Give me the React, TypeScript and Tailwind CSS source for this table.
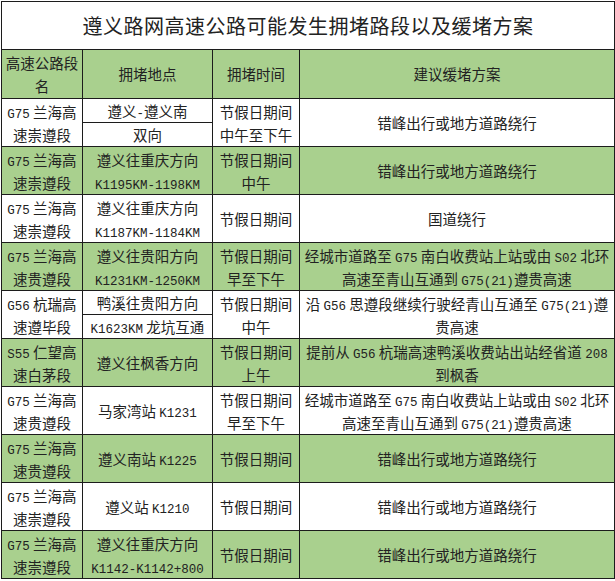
import React from 'react';

type Row = {
  green: boolean;
  road: string[];
  place: string[][]; // one entry = single cell, two entries = split cell
  time: string[];
  plan: string[];
};

const rows: Row[] = [
  {
    green: false,
    road: ['G75 兰海高', '速崇遵段'],
    place: [['遵义-遵义南'], ['双向']],
    time: ['节假日期间', '中午至下午'],
    plan: ['错峰出行或地方道路绕行'],
  },
  {
    green: true,
    road: ['G75 兰海高', '速崇遵段'],
    place: [['遵义往重庆方向', 'K1195KM-1198KM']],
    time: ['节假日期间', '中午'],
    plan: ['错峰出行或地方道路绕行'],
  },
  {
    green: false,
    road: ['G75 兰海高', '速崇遵段'],
    place: [['遵义往重庆方向', 'K1187KM-1184KM']],
    time: ['节假日期间'],
    plan: ['国道绕行'],
  },
  {
    green: true,
    road: ['G75 兰海高', '速贵遵段'],
    place: [['遵义往贵阳方向', 'K1231KM-1250KM']],
    time: ['节假日期间', '早至下午'],
    plan: ['经城市道路至 G75 南白收费站上站或由 S02 北环', '高速至青山互通到 G75(21)遵贵高速'],
  },
  {
    green: false,
    road: ['G56 杭瑞高', '速遵毕段'],
    place: [['鸭溪往贵阳方向'], ['K1623KM 龙坑互通']],
    time: ['节假日期间', '中午'],
    plan: ['沿 G56 思遵段继续行驶经青山互通至 G75(21)遵', '贵高速'],
  },
  {
    green: true,
    road: ['S55 仁望高', '速白茅段'],
    place: [['遵义往枫香方向']],
    time: ['节假日期间', '上午'],
    plan: ['提前从 G56 杭瑞高速鸭溪收费站出站经省道 208', '到枫香'],
  },
  {
    green: false,
    road: ['G75 兰海高', '速贵遵段'],
    place: [['马家湾站 K1231']],
    time: ['节假日期间', '早至下午'],
    plan: ['经城市道路至 G75 南白收费站上站或由 S02 北环', '高速至青山互通到 G75(21)遵贵高速'],
  },
  {
    green: true,
    road: ['G75 兰海高', '速贵遵段'],
    place: [['遵义南站 K1225']],
    time: ['节假日期间'],
    plan: ['错峰出行或地方道路绕行'],
  },
  {
    green: false,
    road: ['G75 兰海高', '速崇遵段'],
    place: [['遵义站 K1210']],
    time: ['节假日期间'],
    plan: ['错峰出行或地方道路绕行'],
  },
  {
    green: true,
    road: ['G75 兰海高', '速崇遵段'],
    place: [['遵义往重庆方向', 'K1142-K1142+800']],
    time: ['节假日期间'],
    plan: ['错峰出行或地方道路绕行'],
  },
];

// latin runs look like SimSun half-width glyphs in the original
function Mixed({ text }: { text: string }) {
  const parts = text.split(/([A-Za-z0-9\-+()]+)/);
  return (
    <>
      {parts.map((p, i) =>
        i % 2 === 1 ? (
          <span key={i} className="font-['Liberation_Mono',monospace] text-[12.5px] leading-none">
            {p}
          </span>
        ) : (
          <span key={i}>{p}</span>
        )
      )}
    </>
  );
}

function Lines({ lines }: { lines: string[] }) {
  return (
    <>
      {lines.map((l, i) => (
        <div key={i} className="whitespace-nowrap leading-[23px] h-[23px] overflow-visible">
          <Mixed text={l} />
        </div>
      ))}
    </>
  );
}

const cell = 'border border-[#1c1c1c] text-center align-middle p-0 leading-none';

export default function App() {
  return (
    <div className="bg-white w-[615px] h-[581px] pl-px pt-px font-['Noto_Sans_CJK_SC',sans-serif] text-[#222] text-[14.5px]">
      <table className="table-fixed border-collapse w-[613px]">
        <colgroup>
          <col className="w-[81px]" />
          <col className="w-[130px]" />
          <col className="w-[87px]" />
          <col className="w-[315px]" />
        </colgroup>
        <tbody>
          <tr className="h-[48px]">
            <td colSpan={4} className={`${cell} bg-white text-[20px] tracking-[0.5px]`}>
              遵义路网高速公路可能发生拥堵路段以及缓堵方案
            </td>
          </tr>
          <tr className="h-[49px] bg-[#a9d08e]">
            <td className={cell}>
              <Lines lines={['高速公路段', '名']} />
            </td>
            <td className={cell}>拥堵地点</td>
            <td className={cell}>拥堵时间</td>
            <td className={cell}>建议缓堵方案</td>
          </tr>
          {rows.map((r, i) => {
            const bg = r.green ? 'bg-[#a9d08e]' : 'bg-white';
            const split = r.place.length === 2;
            return (
              <React.Fragment key={i}>
                <tr className={`h-[24px] ${bg}`}>
                  <td rowSpan={2} className={cell}>
                    <Lines lines={r.road} />
                  </td>
                  <td rowSpan={split ? 1 : 2} className={cell}>
                    <Lines lines={r.place[0]} />
                  </td>
                  <td rowSpan={2} className={cell}>
                    <Lines lines={r.time} />
                  </td>
                  <td rowSpan={2} className={cell}>
                    <Lines lines={r.plan} />
                  </td>
                </tr>
                <tr className={`h-[24px] ${bg}`}>
                  {split && (
                    <td className={cell}>
                      <Lines lines={r.place[1]} />
                    </td>
                  )}
                </tr>
              </React.Fragment>
            );
          })}
        </tbody>
      </table>
    </div>
  );
}
